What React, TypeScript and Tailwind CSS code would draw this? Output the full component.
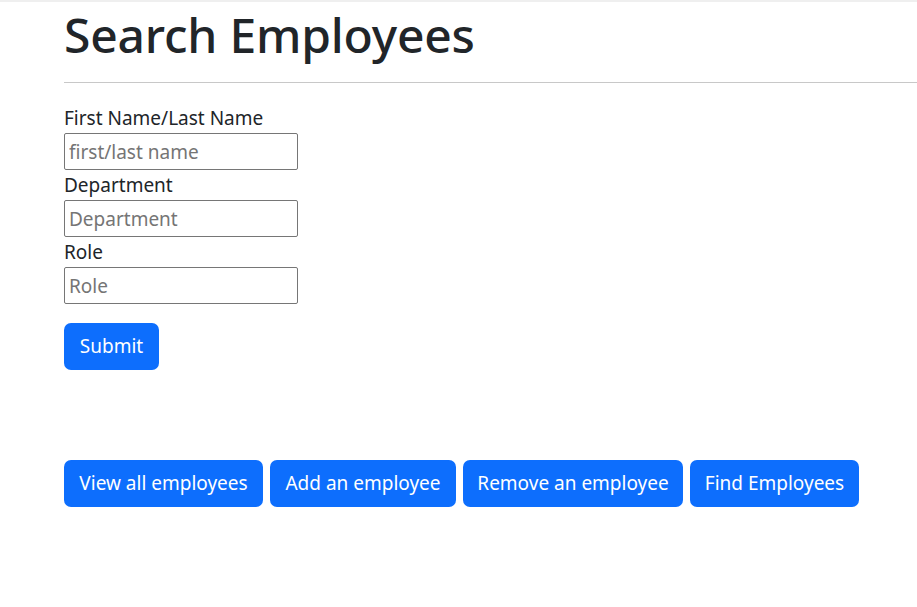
const buttons = [
  { label: "View all employees", width: "w-[199px]" },
  { label: "Add an employee", width: "w-[186px]" },
  { label: "Remove an employee", width: "w-[220px]" },
  { label: "Find Employees", width: "w-[169px]" },
];

function Field({ label, placeholder }: { label: string; placeholder: string }) {
  return (
    <div className="flex flex-col">
      <label className="h-[30px] leading-[30px] text-[19px] text-[#212529]">{label}</label>
      <input
        type="text"
        placeholder={placeholder}
        className="h-[37px] w-[234px] rounded-[2px] border border-[#767676] px-[4px] text-[19px] placeholder:text-[#757575] outline-none"
      />
    </div>
  );
}

export default function App() {
  return (
    <div className="min-h-[607px] bg-white font-['Noto_Sans',sans-serif] text-[#212529]">
      <div className="h-[2px] bg-[#efefef]" />
      <div className="pl-[64px]">
        <h1 className="h-[62px] pt-[2px] text-[48px] leading-[62px] font-medium tracking-[-0.2px]">Search Employees</h1>
      </div>
      <hr className="ml-[64px] mt-[18px] border-t border-[#c8c8c8]" />
      <div className="pl-[64px] pt-[20px]">
        <form className="flex flex-col">
          <Field label="First Name/Last Name" placeholder="first/last name" />
          <Field label="Department" placeholder="Department" />
          <Field label="Role" placeholder="Role" />
          <div className="pt-[19px]">
            <button
              type="button"
              className="h-[47px] w-[95px] rounded-[7px] bg-[#0d6efd] text-[19px] text-white"
            >
              Submit
            </button>
          </div>
        </form>
        <div className="mt-[90px] flex gap-[7px]">
          {buttons.map((b) => (
            <button
              key={b.label}
              type="button"
              className={`${b.width} h-[47px] rounded-[7px] bg-[#0d6efd] text-[19px] text-white`}
            >
              {b.label}
            </button>
          ))}
        </div>
      </div>
    </div>
  );
}
